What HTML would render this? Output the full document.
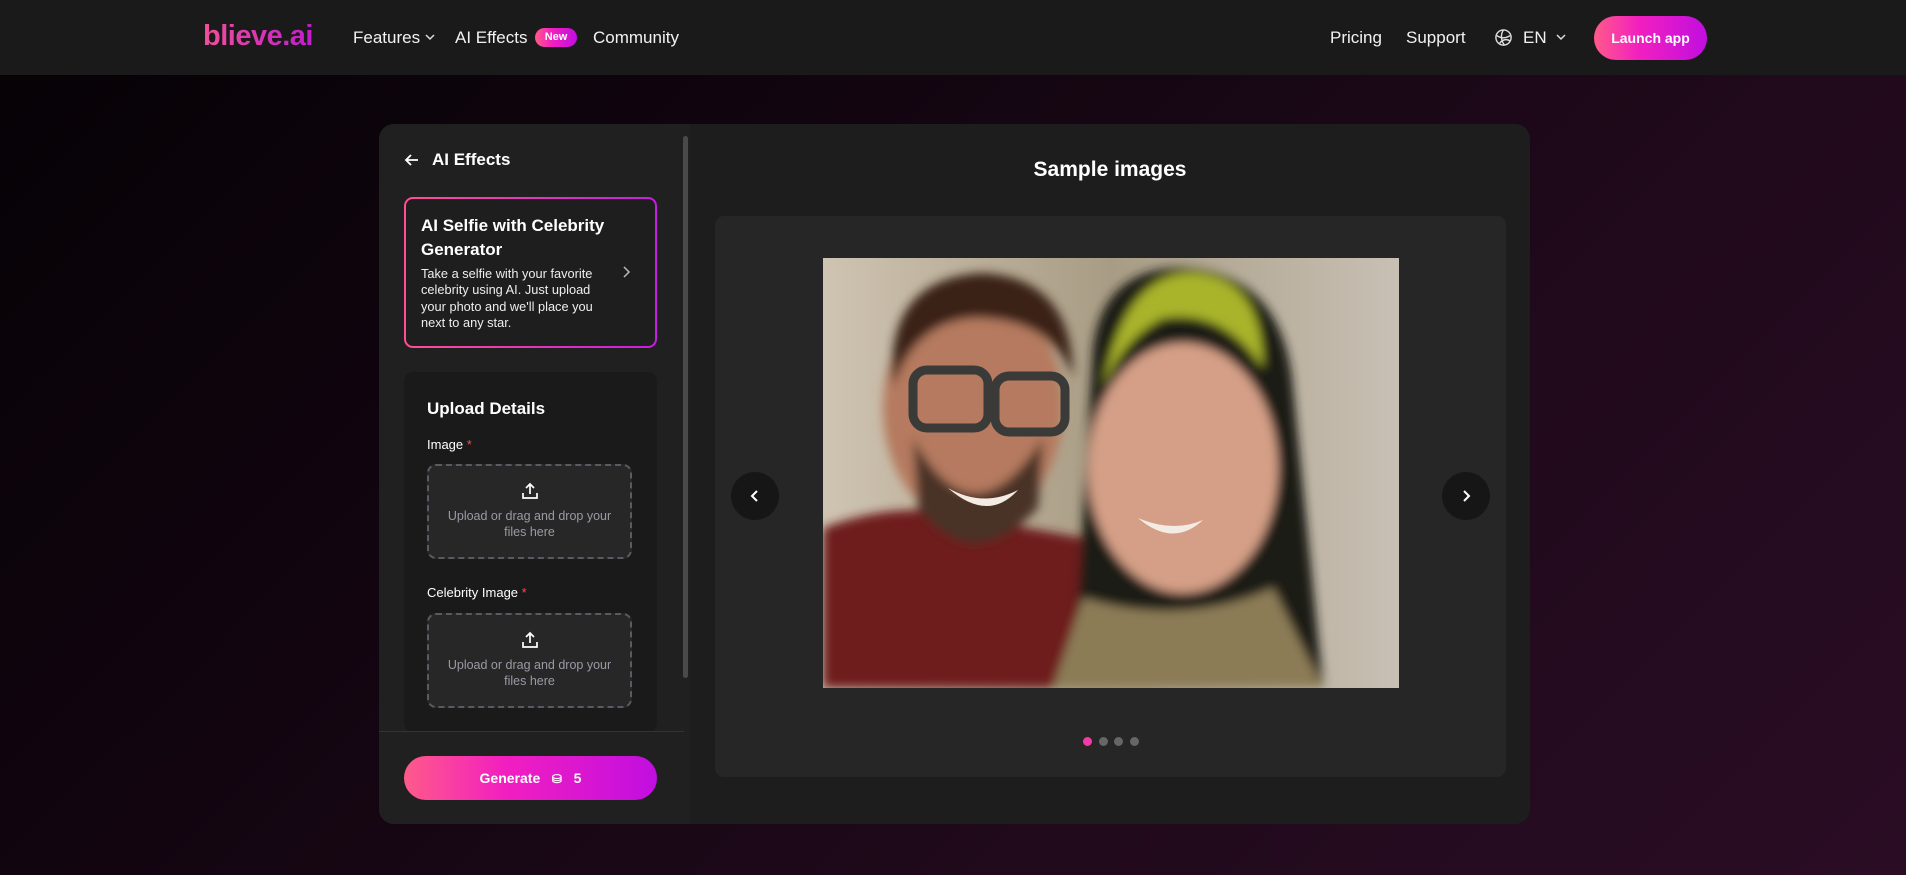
<!DOCTYPE html>
<html><head><meta charset="utf-8"><style>
*{box-sizing:border-box;margin:0;padding:0}
body{width:1906px;height:875px;overflow:hidden;font-family:"Liberation Sans",sans-serif;color:#fff;background:linear-gradient(135deg,#050205 0%,#120510 35%,#210a1c 70%,#2a0d24 100%);position:relative}
.hdr{position:absolute;left:0;top:0;width:1906px;height:75px;background:#1a1a1a}
.a{position:absolute;white-space:nowrap}
.nav{font-size:17px;color:#f2f2f2;top:28px}
.card{position:absolute;left:379px;top:124px;width:1151px;height:700px;border-radius:15px;background:#1c1c1c;overflow:hidden}
.left{position:absolute;left:0;top:0;width:311px;height:700px;background:#202020}
.dz{position:absolute;left:48px;width:205px;height:95px;border:2px dashed #5a5a62;border-radius:9px;background:#272727;text-align:center;color:#9a9aa5;font-size:12.5px;line-height:16px}
.grad{background:linear-gradient(90deg,#ff5a8a 0%,#f21fc0 40%,#c10ee0 100%)}
</style></head><body>
<div class="hdr"></div>
<div class="a" style="left:203px;top:20px;font-size:29px;font-weight:bold;letter-spacing:-0.5px;background:linear-gradient(90deg,#f0509a,#c21ccd);-webkit-background-clip:text;color:transparent">blieve.ai</div>
<div class="a nav" style="left:353px">Features</div>
<svg class="a" style="left:425px;top:33px" width="10" height="8" viewBox="0 0 10 8" fill="none" stroke="#ddd" stroke-width="1.5"><path d="M1 2l4 4 4-4"/></svg>
<div class="a nav" style="left:455px">AI Effects</div>
<div class="a grad" style="left:535px;top:28px;width:42px;height:19px;border-radius:10px;font-size:11px;font-weight:bold;text-align:center;line-height:19px">New</div>
<div class="a nav" style="left:593px">Community</div>
<div class="a nav" style="left:1330px">Pricing</div>
<div class="a nav" style="left:1406px">Support</div>
<svg class="a" style="left:1494px;top:28px" width="19" height="19" viewBox="0 0 20 20" fill="none" stroke="#ddd" stroke-width="1.5"><circle cx="10" cy="10" r="8"/><path d="M3 8c4 3 9 3 14 0M10 2c-3 4-3 11 1 16M6 16c3-4 8-5 11-2"/></svg>
<div class="a nav" style="left:1523px">EN</div>
<svg class="a" style="left:1556px;top:33px" width="10" height="8" viewBox="0 0 10 8" fill="none" stroke="#ddd" stroke-width="1.5"><path d="M1 2l4 4 4-4"/></svg>
<div class="a grad" style="left:1594px;top:16px;width:113px;height:44px;border-radius:22px;font-size:14px;font-weight:bold;text-align:center;line-height:44px">Launch app</div>

<div class="card">
 <div class="left">
  <svg class="a" style="left:25px;top:28px" width="16" height="16" viewBox="0 0 16 16" fill="none" stroke="#fff" stroke-width="1.8"><path d="M14 8H2M7 3L2 8l5 5"/></svg>
  <div class="a" style="left:53px;top:26px;font-size:17px;font-weight:bold">AI Effects</div>
  <div class="a" style="left:25px;top:73px;width:253px;height:151px;border-radius:9px;padding:2px;background:linear-gradient(90deg,#ff4f95,#c51ee0)"><div style="width:100%;height:100%;border-radius:7px;background:#1e1e1e"></div></div>
  <div class="a" style="left:42px;top:90px;font-size:17px;font-weight:bold;line-height:24px;white-space:normal;width:200px">AI Selfie with Celebrity Generator</div>
  <div class="a" style="left:42px;top:142px;font-size:12.8px;line-height:16.4px;white-space:normal;width:190px;color:#eee">Take a selfie with your favorite celebrity using AI. Just upload your photo and we'll place you next to any star.</div>
  <svg class="a" style="left:242px;top:141px" width="10" height="14" viewBox="0 0 10 14" fill="none" stroke="#bbb" stroke-width="1.5"><path d="M3 2l5 5-5 5"/></svg>
  <div class="a" style="left:25px;top:248px;width:253px;height:360px;border-radius:9px;background:#1a1a1a">
   <div class="a" style="left:23px;top:27px;font-size:17px;font-weight:bold">Upload Details</div>
   <div class="a" style="left:23px;top:65px;font-size:13px">Image <span style="color:#ff4a4a">*</span></div>
   <div class="dz" style="top:92px;left:23px"><svg style="margin-top:15px" width="20" height="20" viewBox="0 0 20 20" fill="none" stroke="#fff" stroke-width="1.7"><path d="M10 13V3M6 7l4-4 4 4M3 12v5h14v-5"/></svg><div style="margin-top:3px">Upload or drag and drop your<br>files here</div></div>
   <div class="a" style="left:23px;top:213px;font-size:13px">Celebrity Image <span style="color:#ff4a4a">*</span></div>
   <div class="dz" style="top:241px;left:23px"><svg style="margin-top:15px" width="20" height="20" viewBox="0 0 20 20" fill="none" stroke="#fff" stroke-width="1.7"><path d="M10 13V3M6 7l4-4 4 4M3 12v5h14v-5"/></svg><div style="margin-top:3px">Upload or drag and drop your<br>files here</div></div>
  </div>
  <div class="a" style="left:0;top:607px;width:305px;height:93px;background:#202020;border-top:1px solid #333"></div>
  <div class="a grad" style="left:25px;top:632px;width:253px;height:44px;border-radius:22px;text-align:center;line-height:44px;font-size:14px;font-weight:bold">Generate &nbsp;&nbsp;<span style="font-size:12px">&#9921;</span>&nbsp;&nbsp; 5</div>
  <div class="a" style="left:304px;top:12px;width:5px;height:542px;border-radius:3px;background:#4a4a4a"></div>
 </div>
 <div class="a" style="left:311px;top:0;width:840px;height:700px;background:#1d1d1d"></div>
 <div class="a" style="left:731px;top:34px;width:0;text-align:center"><div style="position:absolute;left:-100px;width:200px;font-size:21px;font-weight:bold">Sample images</div></div>
 <div class="a" style="left:336px;top:92px;width:791px;height:561px;border-radius:9px;background:#262626"></div>
 <svg class="a" style="left:444px;top:134px" width="576" height="430" viewBox="0 0 576 430">
  <defs><linearGradient id="bg" x1="0" x2="1"><stop offset="0" stop-color="#cfc4b2"/><stop offset=".5" stop-color="#a89c84"/><stop offset="1" stop-color="#c8c0b4"/></linearGradient>
  <filter id="bl"><feGaussianBlur stdDeviation="5"/></filter></defs>
  <rect width="576" height="430" fill="url(#bg)"/>
  <g filter="url(#bl)">
  <path d="M0 270 Q80 240 150 260 L260 280 L280 430 L0 430Z" fill="#6e1a1c"/>
  <ellipse cx="150" cy="150" rx="90" ry="118" fill="#b57a5e"/>
  <path d="M70 130 Q60 20 160 15 Q250 20 250 120 Q230 60 150 60 Q90 65 70 130Z" fill="#3a2419"/>
  <path d="M90 180 Q150 290 220 180 L215 250 Q150 320 95 250Z" fill="#4a3128"/>
  <path d="M270 90 Q280 10 360 10 Q460 15 470 130 L500 430 L250 430 Z" fill="#1b1d16"/>
  <ellipse cx="360" cy="210" rx="95" ry="125" fill="#d49f86"/>
  <path d="M280 130 Q300 15 370 15 Q440 20 440 110 Q400 50 340 60 Q300 80 280 130Z" fill="#a9b42c"/>
  <path d="M230 430 L260 340 Q360 370 450 330 L500 430Z" fill="#8c7c57"/>
  </g>
  <rect x="90" y="112" width="75" height="58" rx="14" fill="none" stroke="#3a3b38" stroke-width="9"/>
  <rect x="172" y="118" width="70" height="56" rx="14" fill="none" stroke="#3a3b38" stroke-width="9"/>
  <path d="M125 230 Q160 250 195 232 Q165 265 125 230Z" fill="#f4ece4"/>
  <path d="M315 260 Q350 275 380 262 Q350 290 315 260Z" fill="#f4ece4"/>
 </svg>
 <div class="a" style="left:352px;top:348px;width:48px;height:48px;border-radius:50%;background:#161616"></div>
 <svg class="a" style="left:368px;top:364px" width="16" height="16" viewBox="0 0 16 16" fill="none" stroke="#fff" stroke-width="2"><path d="M10 3L5 8l5 5"/></svg>
 <div class="a" style="left:1063px;top:348px;width:48px;height:48px;border-radius:50%;background:#161616"></div>
 <svg class="a" style="left:1079px;top:364px" width="16" height="16" viewBox="0 0 16 16" fill="none" stroke="#fff" stroke-width="2"><path d="M6 3l5 5-5 5"/></svg>
 <div class="a" style="left:704px;top:613px;width:9px;height:9px;border-radius:50%;background:#f33ba6"></div>
 <div class="a" style="left:720px;top:613px;width:9px;height:9px;border-radius:50%;background:#666"></div>
 <div class="a" style="left:735px;top:613px;width:9px;height:9px;border-radius:50%;background:#666"></div>
 <div class="a" style="left:751px;top:613px;width:9px;height:9px;border-radius:50%;background:#666"></div>
</div>
</body></html>
